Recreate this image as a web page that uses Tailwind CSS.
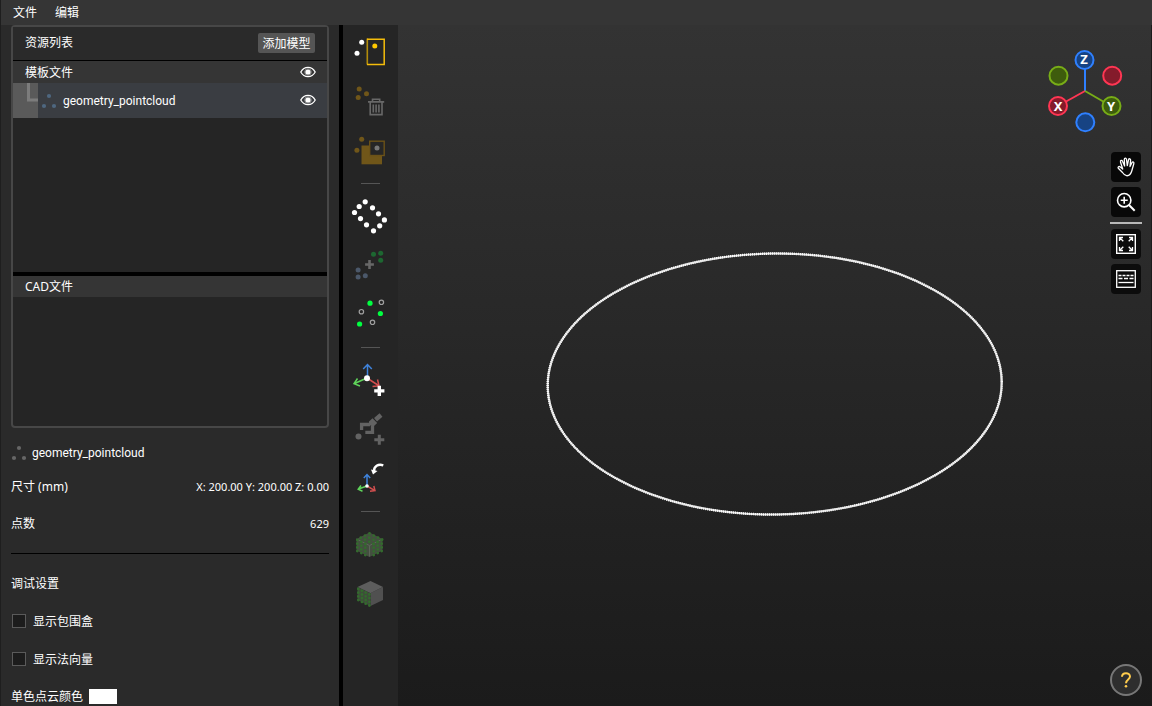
<!DOCTYPE html>
<html lang="zh-CN">
<head>
<meta charset="utf-8">
<title>模型编辑器</title>
<script src="https://cdn.jsdelivr.net/npm/@tailwindcss/browser@4"></script>
</head>
<body class="h-screen overflow-hidden flex flex-col bg-[#2a2a2a] text-white text-xs font-['Noto_Sans','Noto_Sans_CJK_SC',sans-serif] border-l border-[#1e1e1e]">
<svg class="hidden">
  <symbol id="eye" viewBox="0 0 16 12"><path d="M.8 6C4.200-.2 11.800-.2 15.200 6 11.800 12.200 4.200 12.200.8 6Z" fill="none" stroke="#fff" stroke-width="1.300"/><circle cx="8" cy="6" r="3.300" fill="none" stroke="#bbb" stroke-width=".6"/><circle cx="8" cy="6" r="2.600" fill="#fff"/></symbol>
  <symbol id="points" viewBox="0 0 16 16"><circle cx="8" cy="3" r="2.100"/><circle cx="3" cy="13" r="2.100"/><circle cx="13" cy="13" r="2.100"/></symbol>
</svg>

<nav class="h-[25px] shrink-0 bg-[#353535] flex items-center gap-[18px] pl-3">
  <button>文件</button>
  <button>编辑</button>
</nav>

<div class="flex flex-1 min-h-0">
  <aside class="w-[338px] shrink-0 overflow-hidden pl-[10px] pr-[10px]">
    <section class="border-2 border-[#474747] rounded bg-[#252525]">
      <header class="h-[34px] box-border bg-[#2a2a2a] border-b border-black flex items-center justify-between pl-3 pr-3 pb-px">
        <h2>资源列表</h2>
        <button class="h-5 w-[57px] pt-px rounded-xs bg-[#555]">添加模型</button>
      </header>
      <div class="h-[22px] bg-[#353535] flex items-center justify-between pl-3 pr-[11px]">
        <h3 class="pt-px">模板文件</h3>
        <button aria-label="显示模板文件"><svg class="w-4 h-3"><use href="#eye"/></svg></button>
      </div>
      <div class="h-[35px] bg-[#3a3d42] flex items-center pr-[11px]">
        <svg class="w-[25px] h-[35px] bg-[#5a5a5a]" viewBox="0 0 25 35"><path d="M15.500 0V17H25" fill="none" stroke="#7c7c7c" stroke-width="3"/></svg>
        <svg class="w-4 h-4 ml-[3px] fill-[#4e6780]"><use href="#points"/></svg>
        <span class="ml-[6px] flex-1 font-['Roboto',sans-serif]">geometry_pointcloud</span>
        <button aria-label="显示 geometry_pointcloud" class="pb-px"><svg class="w-4 h-3"><use href="#eye"/></svg></button>
      </div>
      <div class="h-[154px]"></div>
      <div class="h-1 bg-black"></div>
      <h3 class="h-[21px] bg-[#353535] flex items-center pl-3">CAD文件</h3>
      <div class="h-[129px]"></div>
    </section>

    <section class="border-b border-black pb-5">
      <div class="flex items-center h-[18px] mt-4"><svg class="w-4 h-4 mr-[5px] fill-[#666]"><use href="#points"/></svg><span class="font-['Roboto',sans-serif]">geometry_pointcloud</span></div>
      <div class="flex items-center justify-between h-[18px] mt-4"><span>尺寸 (mm)</span><span class="text-[11px]">X: 200.00 Y: 200.00 Z: 0.00</span></div>
      <div class="flex items-center justify-between h-[18px] mt-[19px]"><span>点数</span><span class="text-[11px]">629</span></div>
    </section>

    <section class="pt-[21px]">
      <h2 class="h-[18px] flex items-center">调试设置</h2>
      <label class="h-[18px] mt-5 flex items-center gap-[7px] pl-px"><input type="checkbox" class="appearance-none size-[14px] mb-0.5 border border-[#5a5a5a] bg-[#1c1c1c] checked:bg-[#ffc800]">显示包围盒</label>
      <label class="h-[18px] mt-5 flex items-center gap-[7px] pl-px"><input type="checkbox" class="appearance-none size-[14px] mb-0.5 border border-[#5a5a5a] bg-[#1c1c1c] checked:bg-[#ffc800]">显示法向量</label>
      <div class="h-[18px] mt-[19px] flex items-center gap-[6px]"><span>单色点云颜色</span><button aria-label="单色点云颜色" class="w-7 h-[15px] mb-px bg-white"></button></div>
    </section>
  </aside>

  <div class="w-1 shrink-0 bg-black"></div>

  <div role="toolbar" class="w-[55px] shrink-0 bg-[#252525] flex flex-col items-center pt-1">
    <button aria-label="框选点"><svg class="w-[55px] h-[49px]" viewBox="0 0 55 49"><g fill="#fff"><circle cx="18.700" cy="13.300" r="2.500"/><circle cx="14" cy="24.300" r="2.500"/></g><path d="M24.300 9.500V35.500" stroke="#b28c0c" stroke-width="1.600"/><path d="M24 10.200H41.200V35.500H24" fill="none" stroke="#f5bd0b" stroke-width="1.500"/><circle cx="31.800" cy="17" r="2.500" fill="#ffc800"/></svg></button>
    <button aria-label="删除点"><svg class="w-[55px] h-[49px]" viewBox="0 0 55 49"><g fill="#705619"><circle cx="16.200" cy="11" r="2.500"/><circle cx="23.500" cy="15.800" r="2.500"/><circle cx="15.200" cy="19.500" r="2.500"/></g><path d="M25 23.900H41.200M29.500 23.500V21.300H36.700V23.500M27.200 24V36.600H39V24M30.300 26.500V34.500M33.100 26.500V34.500M35.900 26.500V34.500" fill="none" stroke="#686868" stroke-width="1.600"/></svg></button>
    <button aria-label="保留选区"><svg class="w-[55px] h-[49px]" viewBox="0 0 55 49"><g fill="#705619"><circle cx="18.700" cy="12.200" r="2.500"/><circle cx="13.900" cy="23.200" r="2.500"/><path d="M18.500 18.500H39V37.300H18.500Z"/></g><rect x="26.700" y="14.200" width="14.500" height="14.300" fill="#262626" stroke="#6b5218" stroke-width="1.400"/><circle cx="34" cy="20.900" r="2.500" fill="#777"/></svg></button>
    <hr class="w-[19px] border-[#555] mt-[7px] mb-[9px]">
    <button aria-label="点云轮廓"><svg class="w-[55px] h-[49px]" viewBox="0 0 55 49" fill="#fff"><circle cx="22.200" cy="8.800" r="2.600"/><circle cx="16.200" cy="13.500" r="2.600"/><circle cx="29.500" cy="14.800" r="2.600"/><circle cx="11.500" cy="19.500" r="2.600"/><circle cx="35.500" cy="20.800" r="2.600"/><circle cx="17.500" cy="25.600" r="2.600"/><circle cx="41.400" cy="26.900" r="2.600"/><circle cx="23.500" cy="31.800" r="2.600"/><circle cx="36.700" cy="32.800" r="2.600"/><circle cx="30.500" cy="37.800" r="2.600"/></svg></button>
    <button aria-label="合并点云"><svg class="w-[55px] h-[49px]" viewBox="0 0 55 49"><g fill="#1d6731"><circle cx="30.500" cy="12.200" r="2.500"/><circle cx="37.700" cy="11.200" r="2.500"/><circle cx="37.700" cy="18.300" r="2.500"/></g><path d="M26.500 18.100V26.900M22.100 22.500H30.900" stroke="#686868" stroke-width="2.600"/><g fill="#4b586a"><circle cx="15.100" cy="27.900" r="2.500"/><circle cx="22.300" cy="33.800" r="2.500"/><circle cx="15.100" cy="35.100" r="2.500"/></g></svg></button>
    <button aria-label="点云采样"><svg class="w-[55px] h-[49px]" viewBox="0 0 55 49"><g fill="#00ff40"><circle cx="27" cy="12.200" r="2.600"/><circle cx="37.400" cy="22.500" r="2.600"/><circle cx="16.600" cy="33" r="2.600"/></g><g fill="none" stroke="#a0a0a0" stroke-width="1.200"><circle cx="38.400" cy="11.300" r="2.200"/><circle cx="18.400" cy="20.700" r="2.200"/><circle cx="29.500" cy="31.300" r="2.200"/></g></svg></button>
    <hr class="w-[19px] border-[#555] mt-[7px] mb-[9px]">
    <button aria-label="添加坐标系"><svg class="w-[55px] h-[49px]" viewBox="0 0 55 49" fill="none" stroke-width="1.500"><path d="M24.500 20V8M20.200 12 24.500 7.500 28.800 12" stroke="#3f83dc"/><path d="M24 21 11.500 26.500M14.500 21.500 11 26.700 17 29" stroke="#5fd35a"/><path d="M24 21 35.500 28.500M34.500 22.500 36 28.800 29.500 29.500" stroke="#d24f4f"/><circle cx="24" cy="21.200" r="3" fill="#fff"/><path d="M36.300 28.800V39M31.200 33.900H41.400" stroke="#fff" stroke-width="3.400"/></svg></button>
    <button aria-label="添加抓手"><svg class="w-[55px] h-[49px]" viewBox="0 0 55 49" fill="none" stroke="#636363"><circle cx="15.500" cy="30.400" r="3" fill="#636363" stroke="none"/><path d="M20.200 22.300H18.600V18.500H27M22.300 26.300H29.500V19.500" stroke-width="3.300"/><path d="M26 15.500 29.500 12.300 34.200 17 30.500 20.500 26 19Z" fill="#636363" stroke="none"/><path d="M32.500 13.700 38 9" stroke-width="4.500"/><path d="M36.300 28.800V38.800M31.300 33.800H41.300" stroke-width="3"/></svg></button>
    <button aria-label="重置坐标系"><svg class="w-[55px] h-[49px]" viewBox="0 0 55 49" fill="none" stroke-width="1.500"><path d="M24 30V20M20.800 23 24 19.600 27.200 23" stroke="#3f83dc"/><path d="M24 31 15.500 34M18 30.500 15.200 34.200 19.500 36.200" stroke="#5fd35a"/><path d="M24 31 31.500 35.300M30.800 31 32 35.500 27 36.200" stroke="#d24f4f"/><circle cx="24" cy="31" r="1.800" fill="#fff"/><path d="M40.300 10.300C35 8.500 31 11.500 31 16" stroke="#fff" stroke-width="2.400"/><path d="M28 14.500 34.500 16 30 19.500Z" fill="#fff"/></svg></button>
    <hr class="w-[19px] border-[#555] mt-[7px] mb-[9px]">
    <button aria-label="点云立方体"><svg class="w-[55px] h-[49px]" viewBox="0 0 55 49"><path d="M26.500 11.500 39.500 18V29.500L26.500 36 13.500 29.500V18Z" fill="#444f40"/><path d="M13.500 18 26.500 24.500 39.500 18M26.500 24.500V35.500" fill="none" stroke="#5c6358" stroke-width="1"/><g fill="none" stroke="#336b2d" stroke-width="2.800" stroke-linecap="round"><path d="M26.500 12.500 40 19M22 14.700 35.500 21.300M17.800 16.700 31.300 23.300" stroke-dasharray="0 4.700"/><path d="M14.300 19V30.200M18.300 21V32.200M22.300 23V34.200M30.700 23V34.200M34.700 21V32.200M38.700 19V30.200" stroke-dasharray="0 3.700"/></g></svg></button>
    <button aria-label="网格立方体"><svg class="w-[55px] h-[49px]" viewBox="0 0 55 49"><path d="M27.500 11 40 17 27.500 23.300 14.500 17Z" fill="#5d5d5d"/><path d="M27.500 23 40 17V30L27.500 36Z" fill="#505050"/><path d="M14.500 17 27.500 23.300V36L14.500 30Z" fill="#3f4c3b"/><g fill="none" stroke="#336b2d" stroke-width="2.800" stroke-linecap="round"><path d="M15.300 19V30.200M19 20.800V32M22.700 22.600V33.800M26.400 24.400V35.600" stroke-dasharray="0 3.700"/></g></svg></button>
  </div>

  <main class="relative flex-1 min-w-0 bg-linear-to-b from-[#333] to-[#1b1b1b] border-r border-[#1c1c1c]">
    <svg class="absolute left-[138px] top-[215px] w-[480px] h-[288px]" viewBox="0 0 480 288"><g transform="rotate(-.6 239 144)" fill="none"><ellipse cx="238.700" cy="144" rx="227" ry="130.500" stroke="#d8d8d8" stroke-width="2"/><ellipse cx="238.700" cy="144" rx="227" ry="130.500" stroke="#fff" stroke-width="2.500" stroke-dasharray="1 1"/></g></svg>

    <svg class="absolute right-[27px] top-[22px] w-[78px] h-[88px] font-['Noto_Sans',sans-serif]" viewBox="1046 47 78 88" fill="none" stroke-width="2">
      <path d="M1085 91V60" stroke="#2f80ff"/><path d="M1085 91 1058 106" stroke="#ff3653"/><path d="M1085 91 1111 106" stroke="#78ad17"/>
      <circle cx="1084.500" cy="60" r="9" fill="#174383" stroke="#2f80ff"/><circle cx="1085.300" cy="122.300" r="9" fill="#174383" stroke="#2f80ff"/>
      <circle cx="1058.500" cy="75.700" r="9" fill="#3e5c0d" stroke="#78ad17"/><circle cx="1111.500" cy="106" r="9" fill="#3e5c0d" stroke="#78ad17"/>
      <circle cx="1112.200" cy="75.700" r="9" fill="#841b2b" stroke="#ff3653"/><circle cx="1058" cy="106" r="9" fill="#841b2b" stroke="#ff3653"/>
      <g fill="#fff" font-size="13" font-weight="700" text-anchor="middle"><text x="1084" y="64">Z</text><text x="1058" y="111">X</text><text x="1111" y="111">Y</text></g>
    </svg>

    <div class="absolute right-[9px] top-[127px] flex flex-col items-center gap-[5px]">
      <button aria-label="平移" class="size-[30px] rounded-sm bg-[#080808]"><svg class="size-[30px]" viewBox="0 0 30 30" fill="none" stroke="#fff" stroke-width="1.300" stroke-linecap="round" stroke-linejoin="round"><path d="M11.500 20.500 7.300 16.300C6.500 15 8 13.900 9.300 15L11.700 17 9.500 10C9.100 8.200 10.900 7.700 11.500 9.300L13.600 14 13.300 7.500C13.300 5.700 15.300 5.700 15.500 7.500L16.300 13.700 17.500 7.800C18 6.200 19.800 6.600 19.600 8.300L19 14.500 20.900 10.700C21.800 9.300 23.300 10 22.800 11.700L20.900 18.500C20 22 18.500 24 15.500 23.700 13.500 23.500 12.700 22.300 11.500 20.500Z"/></svg></button>
      <button aria-label="放大" class="size-[30px] rounded-sm bg-[#080808]"><svg class="size-[30px]" viewBox="0 0 30 30" fill="none" stroke="#fff" stroke-width="1.600"><circle cx="13.200" cy="13.200" r="6.700"/><path d="M18 18 23.700 23.700" stroke-width="2"/><path d="M13.200 9.700V16.700M9.700 13.200H16.700"/></svg></button>
      <hr class="w-8 border-t-2 border-[#b8b8b8]">
      <button aria-label="适应窗口" class="size-[30px] rounded-sm bg-[#0c0c0c]"><svg class="size-[30px]" viewBox="0 0 30 30" fill="none" stroke="#fff" stroke-width="1.400"><rect x="5.700" y="5.700" width="18.600" height="18.600"/><path d="M8.500 12V8.500H12M8.500 8.500 12.300 12.300M18 8.500H21.500V12M21.500 8.500 17.700 12.300M8.500 18V21.500H12M8.500 21.500 12.300 17.700M18 21.500H21.500V18M21.500 21.500 17.700 17.700" stroke-width="1.300"/></svg></button>
      <button aria-label="显示设置" class="size-[30px] rounded-sm bg-[#0c0c0c]"><svg class="size-[30px]" viewBox="0 0 30 30" fill="none" stroke="#fff" stroke-width="1.300"><rect x="5.700" y="6.700" width="18.600" height="16.600"/><path d="M7.500 11.500H22.500" stroke-dasharray="3 1"/><path d="M7.500 14.500H22.500" stroke-dasharray="4 1.500"/><path d="M7.500 18.500H22.500"/></svg></button>
    </div>

    <button aria-label="帮助" class="absolute right-[9px] bottom-[10px] size-8 rounded-full border-2 border-[#777] bg-[#2e2e2e]"><svg class="size-7" viewBox="0 0 28 28" fill="none" stroke="#ffcc4d" stroke-width="2"><path d="M10 10.800C10 6 18 6 18 10.600 18 13.500 14 13.500 14 17.200"/><circle cx="14" cy="20.200" r="1.300" fill="#ffcc4d" stroke="none"/></svg></button>
  </main>
</div>
</body>
</html>
